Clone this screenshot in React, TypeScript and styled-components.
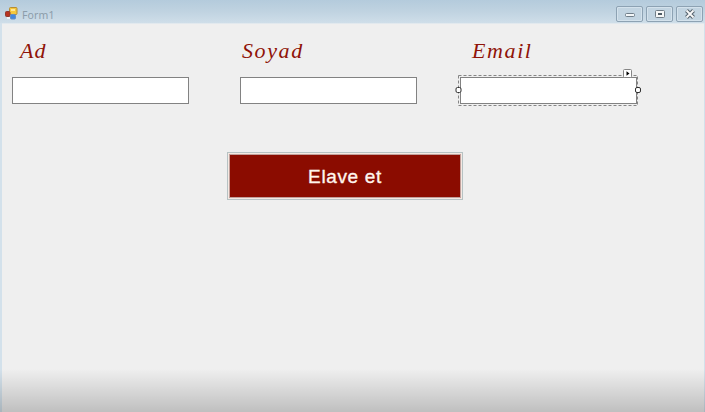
import React from 'react';
import styled, { createGlobalStyle } from 'styled-components';

const GlobalStyle = createGlobalStyle`
  * { box-sizing: border-box; }
  body { margin: 0; overflow: hidden; }
`;

const Window = styled.div`
  position: relative;
  display: flex;
  flex-direction: column;
  width: 705px;
  height: 412px;
  background: #d3e1eb;
  font-family: "Liberation Sans", sans-serif;
`;

const TitleBar = styled.header`
  display: flex;
  align-items: center;
  height: 23px;
  padding: 4px 2px 0 5px;
  background: linear-gradient(#b4cbdc, #c0d3e1 50%, #cfdee9);
`;

const Title = styled.span`
  flex: 1;
  margin-left: 4px;
  padding-top: 2px;
  font: 10.5px/14px "Noto Sans", sans-serif;
  letter-spacing: 0.15px;
  color: #8c9daa;
`;

const Controls = styled.div`
  display: flex;
  gap: 3px;
`;

const ControlButton = styled.button`
  display: flex;
  align-items: center;
  justify-content: center;
  width: 27px;
  height: 16px;
  padding: 0;
  border: 1px solid #8da2b3;
  border-radius: 2px;
  background: #c2d4e1;
  box-shadow: inset 0 0 0 1px #d4e2ec;
`;

const FormSurface = styled.main`
  flex: 1;
  margin: 0 1px 0 2px;
  padding-top: 14px;
  border-top: 1px solid #e2e9ee;
  background: #efefef;
`;

const Fields = styled.div`
  display: grid;
  grid-template-columns: 228px 220px 178px;
  padding-left: 10px;
`;

const Field = styled.div`
  display: flex;
  flex-direction: column;
`;

const Label = styled.label<{ $indent: number; $spacing: number }>`
  height: 39px;
  padding-left: ${p => p.$indent}px;
  font: italic 22px/26px "Liberation Serif", serif;
  letter-spacing: ${p => p.$spacing}px;
  color: #8f1308;
`;

const InputFrame = styled.div`
  position: relative;
  width: 177px;
  height: 27px;
`;

const Input = styled.input`
  display: block;
  width: 100%;
  height: 100%;
  border: 1px solid #828282;
  outline: 0;
  background: #fff;
`;

const Selection = styled.svg`
  position: absolute;
  left: -5px;
  top: -9px;
`;

const ButtonRow = styled.div`
  display: flex;
  padding: 48px 0 0 225px;
`;

const SubmitButton = styled.button`
  width: 236px;
  height: 48px;
  padding: 1px 0 0;
  border: 1px solid #b6c2c3;
  background: #8b0c00;
  box-shadow: inset 0 0 0 1px #f5e8e2, inset 0 0 0 2px #c1a09b;
  color: #fff5ed;
  font: 19px "Liberation Sans", sans-serif;
  letter-spacing: 0.65px;
  -webkit-text-stroke: 0.35px #fff5ed;
`;

const BottomShade = styled.div`
  position: absolute;
  inset: auto 0 0;
  height: 43px;
  background: linear-gradient(transparent, rgba(0, 0, 0, 0.2));
  pointer-events: none;
`;

const FormIcon = () => (
  <svg width="13" height="13" viewBox="0 0 13 13">
    <rect x="4.5" y="0.5" width="7.5" height="7" rx="1" fill="#f4c83e" stroke="#b78d32" />
    <path d="M6 2h4v2H6z" fill="#ffe798" />
    <rect x="0.5" y="4.5" width="4.5" height="5" rx="1" fill="#b83421" stroke="#8f3b30" />
    <rect x="5.5" y="7.5" width="5" height="4.5" rx="1" fill="#4287df" stroke="#668fc5" />
    <path d="M2 10h3v2H2z" fill="#eef3f6" />
  </svg>
);

const SelectionMarks = () => (
  <Selection width="187" height="40" viewBox="0 0 187 40">
    <path d="M3.5 7.5H182.5V37.5H3.5Z" fill="none" stroke="#858585" strokeDasharray="3 2" />
    <rect x="1" y="19.5" width="5" height="5" rx="1.5" fill="#fff" stroke="#303030" />
    <rect x="180.5" y="19.5" width="5" height="5" rx="1.5" fill="#fff" stroke="#303030" />
    <rect x="168.5" y="1.5" width="8" height="8" rx="1" fill="#fff" stroke="#858585" />
    <path d="m171.5 3.2 3 2.3-3 2.3z" fill="#000" />
  </Selection>
);

const fields = [
  { label: 'Ad', indent: 8, spacing: 1, selected: false },
  { label: 'Soyad', indent: 2, spacing: 1.6, selected: false },
  { label: 'Email', indent: 12, spacing: 1.6, selected: true },
];

export default function App() {
  return (
    <>
      <GlobalStyle />
      <Window>
        <TitleBar>
          <FormIcon />
          <Title>Form1</Title>
          <Controls>
            <ControlButton aria-label="Minimize">
              <svg width="12" height="10"><rect x="1.5" y="4.5" width="9" height="3" rx="1" fill="#f3f6f8" stroke="#6f7d88" /></svg>
            </ControlButton>
            <ControlButton aria-label="Maximize">
              <svg width="12" height="10"><rect x="1.5" y="1.5" width="9" height="7" rx="1" fill="#f6f7f7" stroke="#707d87" /><path d="M4 4h4v2H4z" fill="#4e5b64" /></svg>
            </ControlButton>
            <ControlButton aria-label="Close">
              <svg width="12" height="10"><path d="m2.5 1.5 7 7m0-7-7 7" stroke="#586570" strokeWidth="4" /><path d="m2.5 1.5 7 7m0-7-7 7" stroke="#fafafa" strokeWidth="1.8" /></svg>
            </ControlButton>
          </Controls>
        </TitleBar>
        <FormSurface>
          <Fields>
            {fields.map(field => (
              <Field key={field.label}>
                <Label htmlFor={field.label} $indent={field.indent} $spacing={field.spacing}>{field.label}</Label>
                <InputFrame>
                  <Input id={field.label} />
                  {field.selected && <SelectionMarks />}
                </InputFrame>
              </Field>
            ))}
          </Fields>
          <ButtonRow><SubmitButton>Elave et</SubmitButton></ButtonRow>
        </FormSurface>
        <BottomShade />
      </Window>
    </>
  );
}
